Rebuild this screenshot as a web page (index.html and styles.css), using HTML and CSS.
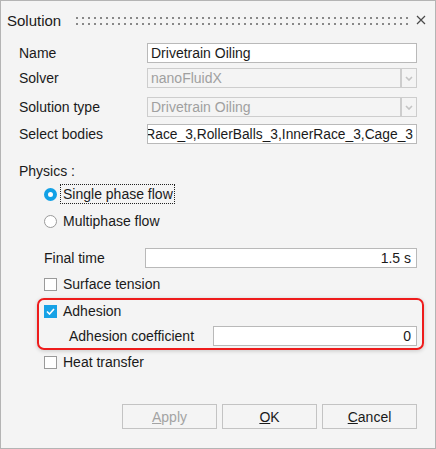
FILE: index.html
```html
<!DOCTYPE html>
<html>
<head>
<meta charset="utf-8">
<link rel="stylesheet" href="styles.css">
</head>
<body>
<div class="window">
  <div class="titlebar">
    <span class="title">Solution</span>
    <svg class="grip" width="334" height="8" viewBox="0 0 334 8">
      <defs>
        <pattern id="dots" width="6" height="6" patternUnits="userSpaceOnUse">
          <rect x="0" y="0" width="2" height="2" fill="#888888"/>
        </pattern>
      </defs>
      <rect x="0" y="0" width="334" height="8" fill="url(#dots)"/>
    </svg>
    <svg class="close" width="10" height="10" viewBox="0 0 10 10">
      <path d="M1 1 L9 9 M9 1 L1 9" stroke="#4a4a4a" stroke-width="1.2" fill="none"/>
    </svg>
  </div>

  <div class="form">
    <div class="row r-name">
      <span class="label">Name</span>
      <div class="field">Drivetrain Oiling</div>
    </div>
    <div class="row r-solver">
      <span class="label">Solver</span>
      <div class="combo">
        <div class="field disabled">nanoFluidX</div>
        <div class="drop"><svg width="8" height="5" viewBox="0 0 8 5"><path d="M1 1 L4 4 L7 1" stroke="#c4c4c4" stroke-width="1.6" fill="none"/></svg></div>
      </div>
    </div>
    <div class="row r-type">
      <span class="label">Solution type</span>
      <div class="combo">
        <div class="field disabled">Drivetrain Oiling</div>
        <div class="drop"><svg width="8" height="5" viewBox="0 0 8 5"><path d="M1 1 L4 4 L7 1" stroke="#c4c4c4" stroke-width="1.6" fill="none"/></svg></div>
      </div>
    </div>
    <div class="row r-bodies">
      <span class="label">Select bodies</span>
      <div class="field scrolled"><span>OuterRace_3,RollerBalls_3,InnerRace_3,Cage_3</span></div>
    </div>

    <div class="row r-physics">Physics :</div>

    <div class="row opt r-single">
      <span class="radio on"></span>
      <span class="opt-text focus">Single phase flow</span>
    </div>
    <div class="row opt r-multi">
      <span class="radio"></span>
      <span class="opt-text">Multiphase flow</span>
    </div>

    <div class="row opt r-final">
      <span class="sublabel">Final time</span>
      <div class="field num">1.5 s</div>
    </div>

    <div class="row opt r-surface">
      <span class="check"></span>
      <span class="opt-text">Surface tension</span>
    </div>

    <div class="highlight">
      <div class="row r-adh">
        <span class="check on"><svg width="9" height="7" viewBox="0 0 9 7"><path d="M1 3.5 L3.5 6 L8 1" stroke="#fff" stroke-width="1.6" fill="none"/></svg></span>
        <span class="opt-text">Adhesion</span>
      </div>
      <div class="row r-coef">
        <span class="coef-label">Adhesion coefficient</span>
        <div class="field num">0</div>
      </div>
    </div>

    <div class="row opt r-heat">
      <span class="check"></span>
      <span class="opt-text">Heat transfer</span>
    </div>

    <div class="buttons">
      <button class="btn disabled"><u>A</u>pply</button>
      <button class="btn"><u>O</u>K</button>
      <button class="btn"><u>C</u>ancel</button>
    </div>
  </div>
</div>
</body>
</html>
```

FILE: styles.css
```css
html, body {
  margin: 0;
  padding: 0;
  background: #f4f4f4;
}

.window {
  width: 436px;
  height: 449px;
  box-sizing: border-box;
  border: 1px solid #b4b4b4;
  background: #f4f4f4;
  font-family: "Liberation Sans", Arial, sans-serif;
  font-size: 14px;
  color: #1a1a1a;
}

.titlebar {
  display: flex;
  align-items: center;
  height: 38px;
  padding-left: 6px;
}

.title {
  font-size: 15px;
  width: 69px;
  color: #1a1a1a;
}

.grip {
  display: block;
  margin-top: 1px;
}

.close {
  display: block;
  margin-left: 6px;
}

.form {
  padding: 0 18px;
}

.row {
  display: flex;
  align-items: center;
  height: 20px;
  white-space: nowrap;
}

.label {
  width: 128px;
  flex: none;
}

.field {
  flex: 1;
  min-width: 0;
  height: 20px;
  box-sizing: border-box;
  border: 1px solid #b9b9b9;
  background: #fff;
  padding: 0 4px 0 3px;
  display: flex;
  align-items: center;
  white-space: nowrap;
  overflow: hidden;
}

.field.disabled {
  background: #f4f4f4;
  border-color: #cdcdcd;
  color: #a0a0a0;
}

.field.scrolled {
  justify-content: flex-end;
  padding-right: 3px;
}

.field.scrolled span {
  flex: none;
  font-size: 13.8px;
}

.field.num {
  justify-content: flex-end;
  padding-right: 5px;
}

.combo {
  flex: 1;
  display: flex;
}

.drop {
  width: 16px;
  height: 20px;
  box-sizing: border-box;
  border: 1px solid #cdcdcd;
  display: flex;
  align-items: center;
  justify-content: center;
  flex: none;
}

.r-name { margin-top: 4px; }
.r-solver { margin-top: 5px; }
.r-type { margin-top: 9px; }
.r-bodies { margin-top: 7px; }
.r-physics { margin-top: 17px; }
.r-single { margin-top: 3px; }
.r-multi { margin-top: 7px; }
.r-final { margin-top: 17px; }
.r-surface { margin-top: 6px; }
.r-heat { margin-top: 2px; }

.opt {
  padding-left: 25px;
}

.opt-text {
  margin-left: 6px;
  line-height: 20px;
}

.focus {
  margin-left: 3px;
  padding: 0 2px 0 3px;
  outline: 1px dotted #222;
  outline-offset: -1px;
}

.radio {
  width: 13px;
  height: 13px;
  box-sizing: border-box;
  border-radius: 50%;
  border: 1px solid #9a9a9a;
  background: #fff;
  flex: none;
}

.radio.on {
  border: 4px solid #12a1e6;
}

.check {
  width: 13px;
  height: 13px;
  box-sizing: border-box;
  border: 1px solid #9a9a9a;
  background: #fff;
  flex: none;
  display: flex;
  align-items: center;
  justify-content: center;
}

.check.on {
  background: #17a2e6;
  border-color: #17a2e6;
}

.sublabel {
  width: 101px;
  flex: none;
}

.highlight {
  margin: 4px -7px 0 18px;
  border: 2px solid #ee1c1c;
  border-radius: 7px;
  padding: 1px 5px 2px 5px;
  box-shadow: 0 1px 4px rgba(0, 0, 0, 0.18);
}

.r-coef {
  margin-top: 5px;
}

.coef-label {
  width: 169px;
  padding-left: 25px;
  flex: none;
  box-sizing: border-box;
}

.buttons {
  display: flex;
  justify-content: flex-end;
  gap: 5px;
  margin-top: 32px;
}

.btn {
  width: 95px;
  height: 25px;
  box-sizing: border-box;
  border: 1px solid #c3c3c3;
  background: #f4f4f4;
  font-family: "Liberation Sans", Arial, sans-serif;
  font-size: 14px;
  color: #1a1a1a;
  padding: 0;
}

.btn.disabled {
  color: #a3a3a3;
}
```
